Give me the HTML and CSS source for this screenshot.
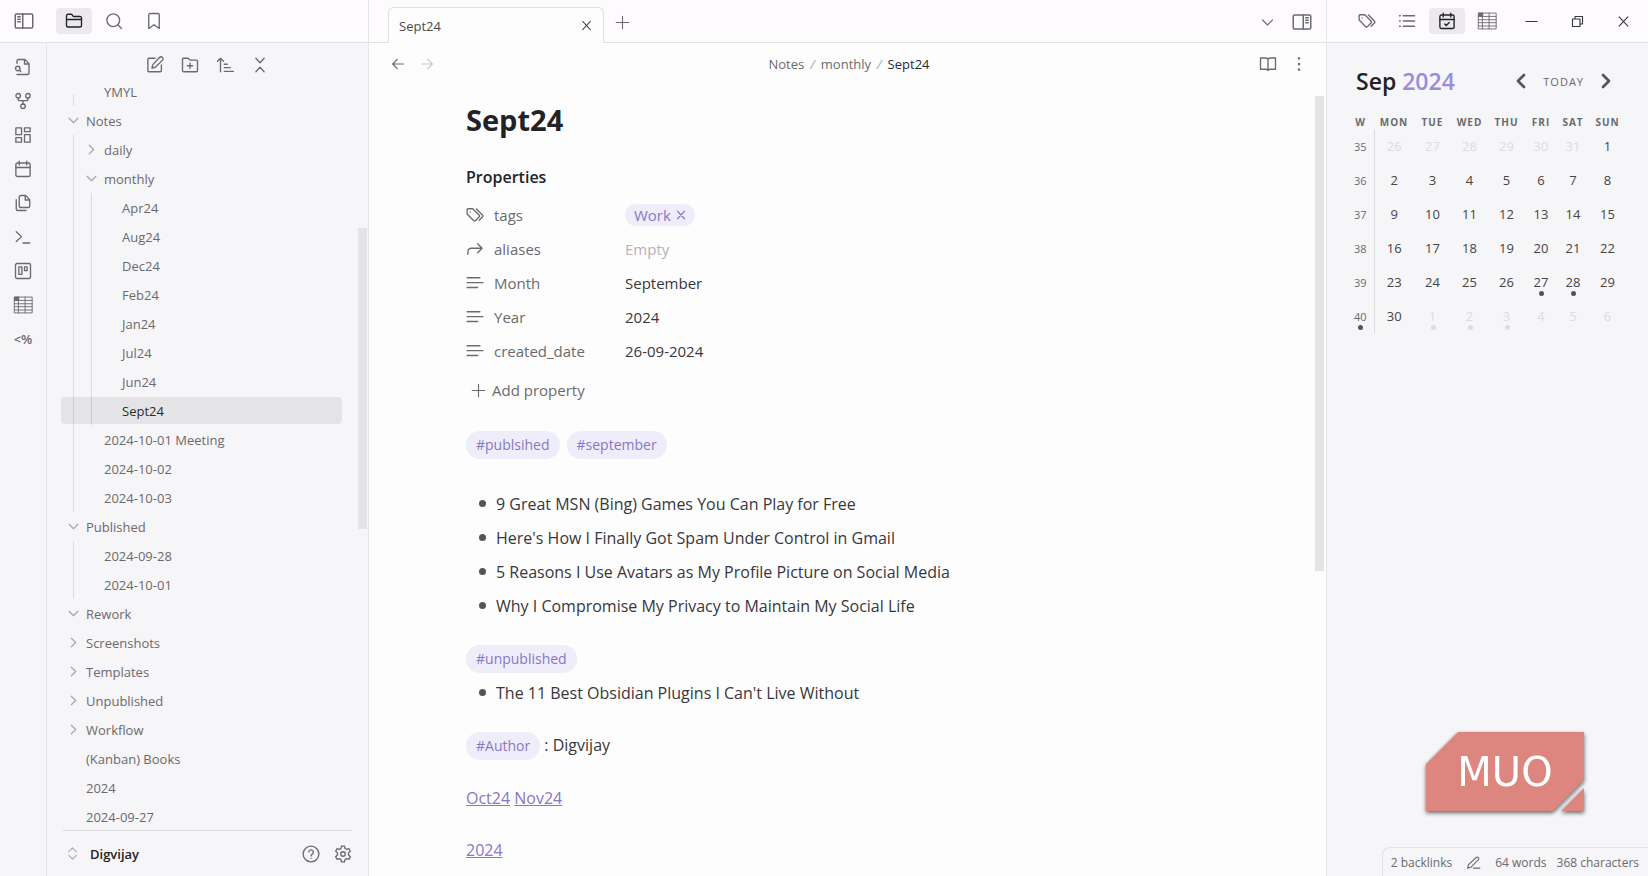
FILE: index.html
```html
<!DOCTYPE html>
<html lang="en">

<head>
    <meta charset="UTF-8">
    <meta name="viewport" content="width=device-width, initial-scale=1.0">
    <title>Sept24 - Notes</title>
    <link rel="stylesheet" href="styles.css">
</head>

<body>
    <!-- icon set -->
    <svg class="icon-set" aria-hidden="true">
        <symbol id="panel-left" viewBox="0 0 24 24"><rect x="1.5" y="3.5" width="21" height="17" rx="1.5"/><path d="M10.5 3.5v17M4.5 7h3M4.5 10h3M4.5 13h3"/></symbol>
        <symbol id="panel-right" viewBox="0 0 24 24"><rect x="1.5" y="3.5" width="21" height="17" rx="1.5"/><path d="M13.5 3.5v17M16.5 7h3M16.5 10h3M16.5 13h3"/></symbol>
        <symbol id="folder" viewBox="0 0 24 24"><path d="M2 10h20M4 20h16a2 2 0 0 0 2-2V8a2 2 0 0 0-2-2h-7.9a2 2 0 0 1-1.7-.9L9.6 3.9A2 2 0 0 0 7.9 3H4a2 2 0 0 0-2 2v13a2 2 0 0 0 2 2Z"/></symbol>
        <symbol id="search" viewBox="0 0 24 24"><circle cx="11" cy="11" r="8.5"/><path d="m22 22-5-5"/></symbol>
        <symbol id="bookmark" viewBox="0 0 24 24"><path d="M19 22l-7-5-7 5V4a2 2 0 0 1 2-2h10a2 2 0 0 1 2 2Z"/></symbol>
        <symbol id="file-search" viewBox="0 0 24 24"><path d="M4 22h14a2 2 0 0 0 2-2V7.5L14.5 2H6a2 2 0 0 0-2 2v3M14 2v6h6"/><circle cx="5" cy="14" r="3"/><path d="m9 18-1.7-1.7"/></symbol>
        <symbol id="graph" viewBox="0 0 24 24"><circle cx="12" cy="19" r="3"/><circle cx="5.5" cy="5" r="3"/><circle cx="18.500" cy="5" r="3"/><path d="M5.5 8v1.500a2 2 0 0 0 2 2h9a2 2 0 0 0 2-2V8M12 11.500V16"/></symbol>
        <symbol id="dashboard" viewBox="0 0 24 24"><path d="M2.500 2.500h7.500v9H2.500zM14 2.500h7.500v5H14zM14 11.500h7.500v10H14zM2.500 15.500h7.500v6H2.500z"/></symbol>
        <symbol id="calendar" viewBox="0 0 24 24"><rect x="2.500" y="4" width="19" height="18" rx="2"/><path d="M7 1.500v5M17 1.500v5M2.500 10h19"/></symbol>
        <symbol id="calendar-check" viewBox="0 0 24 24"><rect x="2.500" y="4" width="19" height="18" rx="2"/><path d="M7 1.500v5M17 1.500v5M2.500 10h19M9 16l2 2 4-4"/></symbol>
        <symbol id="copy" viewBox="0 0 24 24"><path d="M15.500 2H9a2 2 0 0 0-2 2v12a2 2 0 0 0 2 2h10a2 2 0 0 0 2-2V7.500ZM15 2v6h6M3 7.500V20a2 2 0 0 0 2 2h11"/></symbol>
        <symbol id="terminal" viewBox="0 0 24 24"><path d="m3 18 7-6.500L3 5M12 20h9"/></symbol>
        <symbol id="kanban" viewBox="0 0 24 24"><rect x="2" y="2" width="20" height="20" rx="2"/><path d="M6.500 6.500h4v10h-4zM14 6.500h3.500v5H14z"/></symbol>
        <symbol id="table" viewBox="0 0 24 24"><path d="M2 2.500h21v19H2zM2 6.500h21M2 10.500h21M2 14h21M2 18h21M6.500 2.500v19M14.500 2.500v19"/><path class="solid" d="M1.500 2h6v5h-6z"/></symbol>
        <symbol id="edit" viewBox="0 0 24 24"><path d="M12 3H4a1.500 1.500 0 0 0-1.500 1.500v15A1.500 1.500 0 0 0 4 21h15a1.500 1.500 0 0 0 1.500-1.500V12M18 2a2.500 2.500 0 0 1 4 3.500L12.500 15 8 16l1-4.500Z"/></symbol>
        <symbol id="folder-plus" viewBox="0 0 24 24"><path d="M12 9.500v7M8.500 13h7M3.500 21h17a1.500 1.500 0 0 0 1.500-1.500V7a1.500 1.500 0 0 0-1.500-1.500H12L9.500 3h-6A1.500 1.500 0 0 0 2 4.500v15A1.500 1.500 0 0 0 3.500 21Z"/></symbol>
        <symbol id="sort" viewBox="0 0 24 24"><path d="m2 7 4-4 4 4M6 3v18M11 11h4M11 15.500h8M11 20.500h12"/></symbol>
        <symbol id="collapse" viewBox="0 0 24 24"><path d="m6.500 21 5.500-6 5.500 6M6.500 3l5.500 6 5.500-6"/></symbol>
        <symbol id="down" viewBox="0 0 24 24"><path d="m4 8 8 8 8-8"/></symbol>
        <symbol id="right" viewBox="0 0 24 24"><path d="m8 4 8 8-8 8"/></symbol>
        <symbol id="left" viewBox="0 0 24 24"><path d="m16 4-8 8 8 8"/></symbol>
        <symbol id="up-down" viewBox="0 0 24 24"><path d="m5 15.500 7 7 7-7M5 8.500l7-7 7 7"/></symbol>
        <symbol id="help" viewBox="0 0 24 24"><circle cx="12" cy="12" r="10.500"/><path d="M9 9a3 3 0 0 1 6 1c0 2-3 2.500-3 4.500M12 17.500v.1"/></symbol>
        <symbol id="gear" viewBox="0 0 24 24"><path d="M10 1.500h4l.7 3.200 2 1.100 3.100-1 2 3.500-2.400 2.200v2.900l2.400 2.200-2 3.500-3.100-1-2 1.200-.7 3.200h-4l-.7-3.200-2-1.200-3.100 1-2-3.500 2.400-2.200v-2.900L2.200 8.300l2-3.500 3.100 1 2-1.100Z"/><circle cx="12" cy="12" r="3"/></symbol>
        <symbol id="close" viewBox="0 0 24 24"><path d="M5 4.500 19 19.500M19 4.500 5 19.500"/></symbol>
        <symbol id="plus" viewBox="0 0 24 24"><path d="M12 2v20M2 12h20"/></symbol>
        <symbol id="arrow-left" viewBox="0 0 24 24"><path d="M20 12H4M11 5l-7 7 7 7"/></symbol>
        <symbol id="arrow-right" viewBox="0 0 24 24"><path d="M4 12h16M13 5l7 7-7 7"/></symbol>
        <symbol id="book" viewBox="0 0 24 24"><path d="M12 5.500v15M12 5.500C11 4 9.500 4 8 4H2v15h6.500c1.500 0 2.500 0 3.500 1.500 1-1.500 2-1.500 3.500-1.500H22V4h-6c-1.500 0-3 0-4 1.500Z"/></symbol>
        <symbol id="dots" viewBox="0 0 24 24"><path class="solid" d="M10.500 3h3v3h-3zM10.500 10.500h3v3h-3zM10.500 18h3v3h-3z"/></symbol>
        <symbol id="tags" viewBox="0 0 24 24"><path d="M1.500 4.500v6.300l8.500 8.500a2 2 0 0 0 2.800 0l4.500-4.500a2 2 0 0 0 0-2.800L9 3.700H2.300ZM14 4l7.800 7.900a2 2 0 0 1 0 2.800L17.500 19M5.700 7.800v.1"/></symbol>
        <symbol id="list" viewBox="0 0 24 24"><path d="M7 5h15M7 12h15M7 19h15M2 5h1M2 12h1M2 19h1"/></symbol>
        <symbol id="text" viewBox="0 0 24 24"><path d="M1.500 5h17M1.500 11.500h21M1.500 18h14"/></symbol>
        <symbol id="forward" viewBox="0 0 24 24"><path d="m15.500 17 6-6-6-6M2.500 19v-3.500a4.500 4.500 0 0 1 4.500-4.500h14.500"/></symbol>
        <symbol id="minimize" viewBox="0 0 24 24"><path d="M3 12h18"/></symbol>
        <symbol id="restore" viewBox="0 0 24 24"><path d="M4 8h12v12H4zM8 8V4h12v12h-4"/></symbol>
        <symbol id="pen" viewBox="0 0 24 24"><path d="M12 21h10M16.500 4a2.500 2.500 0 0 1 3.500 3.500L8 19.500 2.500 21 4 15.500Z"/></symbol>
    </svg>

    <div class="app">
        <div class="left">
            <header class="bar">
                <button class="icon-btn toggle" aria-label="Toggle sidebar"><svg class="icon lg"><use href="#panel-left"/></svg></button>
                <button class="icon-btn active" aria-label="Files"><svg class="icon"><use href="#folder"/></svg></button>
                <button class="icon-btn" aria-label="Search"><svg class="icon"><use href="#search"/></svg></button>
                <button class="icon-btn" aria-label="Bookmarks"><svg class="icon"><use href="#bookmark"/></svg></button>
            </header>
            <div class="left-body">
                <nav class="ribbon">
                    <button aria-label="Quick switcher"><svg class="icon"><use href="#file-search"/></svg></button>
                    <button aria-label="Graph view"><svg class="icon"><use href="#graph"/></svg></button>
                    <button aria-label="Canvas"><svg class="icon"><use href="#dashboard"/></svg></button>
                    <button aria-label="Daily note"><svg class="icon"><use href="#calendar"/></svg></button>
                    <button aria-label="Insert template"><svg class="icon"><use href="#copy"/></svg></button>
                    <button aria-label="Command palette"><svg class="icon"><use href="#terminal"/></svg></button>
                    <button aria-label="Kanban board"><svg class="icon"><use href="#kanban"/></svg></button>
                    <button aria-label="Table"><svg class="icon lg thin"><use href="#table"/></svg></button>
                    <button class="templater">&lt;%</button>
                </nav>
                <aside class="files">
                    <div class="file-tools">
                        <button aria-label="New note"><svg class="icon"><use href="#edit"/></svg></button>
                        <button aria-label="New folder"><svg class="icon"><use href="#folder-plus"/></svg></button>
                        <button aria-label="Sort order"><svg class="icon"><use href="#sort"/></svg></button>
                        <button aria-label="Collapse all"><svg class="icon"><use href="#collapse"/></svg></button>
                    </div>
                    <div class="tree-wrap">
                        <ul class="tree">
                            <li class="l1"><button>YMYL</button></li>
                            <li><button><svg class="icon chev"><use href="#down"/></svg>Notes</button></li>
                            <li class="l1"><button><svg class="icon chev"><use href="#right"/></svg>daily</button></li>
                            <li class="l1"><button><svg class="icon chev"><use href="#down"/></svg>monthly</button></li>
                            <li class="l2"><button>Apr24</button></li>
                            <li class="l2"><button>Aug24</button></li>
                            <li class="l2"><button>Dec24</button></li>
                            <li class="l2"><button>Feb24</button></li>
                            <li class="l2"><button>Jan24</button></li>
                            <li class="l2"><button>Jul24</button></li>
                            <li class="l2"><button>Jun24</button></li>
                            <li class="l2"><button class="selected">Sept24</button></li>
                            <li class="l1"><button>2024-10-01 Meeting</button></li>
                            <li class="l1"><button>2024-10-02</button></li>
                            <li class="l1"><button>2024-10-03</button></li>
                            <li><button><svg class="icon chev"><use href="#down"/></svg>Published</button></li>
                            <li class="l1"><button>2024-09-28</button></li>
                            <li class="l1"><button>2024-10-01</button></li>
                            <li><button><svg class="icon chev"><use href="#down"/></svg>Rework</button></li>
                            <li><button><svg class="icon chev"><use href="#right"/></svg>Screenshots</button></li>
                            <li><button><svg class="icon chev"><use href="#right"/></svg>Templates</button></li>
                            <li><button><svg class="icon chev"><use href="#right"/></svg>Unpublished</button></li>
                            <li><button><svg class="icon chev"><use href="#right"/></svg>Workflow</button></li>
                            <li><button>(Kanban) Books</button></li>
                            <li><button>2024</button></li>
                            <li><button>2024-09-27</button></li>
                        </ul>
                        <div class="scroll-thumb tree-thumb"></div>
                    </div>
                    <footer class="vault">
                        <button class="vault-name"><svg class="icon sm"><use href="#up-down"/></svg>Digvijay</button>
                        <button aria-label="Help"><svg class="icon"><use href="#help"/></svg></button>
                        <button aria-label="Settings"><svg class="icon"><use href="#gear"/></svg></button>
                    </footer>
                </aside>
            </div>
        </div>

        <main class="main">
            <header class="bar tabs">
                <div class="tab">
                    <span>Sept24</span>
                    <button aria-label="Close tab"><svg class="icon sm"><use href="#close"/></svg></button>
                </div>
                <button class="icon-btn" aria-label="New tab"><svg class="icon md"><use href="#plus"/></svg></button>
                <div class="tabs-end">
                    <button class="tab-list" aria-label="Tab list"><svg class="icon md"><use href="#down"/></svg></button>
                    <button class="icon-btn" aria-label="Toggle right sidebar"><svg class="icon lg"><use href="#panel-right"/></svg></button>
                </div>
            </header>
            <div class="view-head">
                <div class="history">
                    <button aria-label="Back"><svg class="icon"><use href="#arrow-left"/></svg></button>
                    <button class="off" aria-label="Forward"><svg class="icon"><use href="#arrow-right"/></svg></button>
                </div>
                <div class="crumbs"><a href="#">Notes</a><i>/</i><a href="#">monthly</a><i>/</i><b>Sept24</b></div>
                <div class="view-actions">
                    <button aria-label="Reading view"><svg class="icon"><use href="#book"/></svg></button>
                    <button aria-label="More options"><svg class="icon"><use href="#dots"/></svg></button>
                </div>
            </div>
            <div class="note-wrap">
                <article class="note">
                    <h1>Sept24</h1>
                    <h2>Properties</h2>
                    <div class="props">
                        <div class="prop">
                            <span class="key"><svg class="icon"><use href="#tags"/></svg>tags</span>
                            <span class="pill small">Work<button aria-label="Remove tag"><svg class="icon xs"><use href="#close"/></svg></button></span>
                        </div>
                        <div class="prop">
                            <label class="key" for="aliases"><svg class="icon"><use href="#forward"/></svg>aliases</label>
                            <input id="aliases" type="text" placeholder="Empty">
                        </div>
                        <div class="prop">
                            <label class="key" for="month"><svg class="icon"><use href="#text"/></svg>Month</label>
                            <input id="month" type="text" value="September">
                        </div>
                        <div class="prop">
                            <label class="key" for="year"><svg class="icon"><use href="#text"/></svg>Year</label>
                            <input id="year" type="text" value="2024">
                        </div>
                        <div class="prop">
                            <label class="key" for="created"><svg class="icon"><use href="#text"/></svg>created_date</label>
                            <input id="created" type="text" value="26-09-2024">
                        </div>
                    </div>
                    <button class="add-prop"><svg class="icon md"><use href="#plus"/></svg>Add property</button>
                    <p class="line tag-line"><a class="pill" href="#">#publsihed</a><a class="pill" href="#">#september</a></p>
                    <ul class="bullets">
                        <li>9 Great MSN (Bing) Games You Can Play for Free</li>
                        <li>Here's How I Finally Got Spam Under Control in Gmail</li>
                        <li>5 Reasons I Use Avatars as My Profile Picture on Social Media</li>
                        <li>Why I Compromise My Privacy to Maintain My Social Life</li>
                    </ul>
                    <p class="line"><a class="pill" href="#">#unpublished</a></p>
                    <ul class="bullets">
                        <li>The 11 Best Obsidian Plugins I Can't Live Without</li>
                    </ul>
                    <p class="line"><a class="pill" href="#">#Author</a> : Digvijay</p>
                    <p class="line"><a href="#">Oct24</a> <a href="#">Nov24</a></p>
                    <p class="line"><a href="#">2024</a></p>
                </article>
                <div class="scroll-thumb note-thumb"></div>
            </div>
        </main>

        <div class="right">
            <header class="bar">
                <button class="icon-btn" aria-label="Tags"><svg class="icon"><use href="#tags"/></svg></button>
                <button class="icon-btn" aria-label="Outline"><svg class="icon"><use href="#list"/></svg></button>
                <button class="icon-btn active" aria-label="Calendar"><svg class="icon"><use href="#calendar-check"/></svg></button>
                <button class="icon-btn" aria-label="Table"><svg class="icon lg thin"><use href="#table"/></svg></button>
                <div class="window-btns">
                    <button aria-label="Minimize"><svg class="icon md"><use href="#minimize"/></svg></button>
                    <button aria-label="Restore"><svg class="icon md"><use href="#restore"/></svg></button>
                    <button aria-label="Close"><svg class="icon md"><use href="#close"/></svg></button>
                </div>
            </header>
            <section class="calendar">
                <div class="cal-head">
                    <h3>Sep <span>2024</span></h3>
                    <button aria-label="Previous month"><svg class="icon arrow"><use href="#left"/></svg></button>
                    <button class="today">TODAY</button>
                    <button aria-label="Next month"><svg class="icon arrow"><use href="#right"/></svg></button>
                </div>
                <table>
                    <colgroup>
                        <col class="c-week"><col class="c-wide"><col class="c-mid"><col class="c-mid"><col class="c-mid"><col class="c-slim"><col class="c-slim"><col class="c-mid">
                    </colgroup>
                    <thead>
                        <tr><th>W</th><th>MON</th><th>TUE</th><th>WED</th><th>THU</th><th>FRI</th><th>SAT</th><th>SUN</th></tr>
                    </thead>
                    <tbody>
                        <tr><th>35</th><td class="other">26</td><td class="other">27</td><td class="other">28</td><td class="other">29</td><td class="other">30</td><td class="other">31</td><td>1</td></tr>
                        <tr><th>36</th><td>2</td><td>3</td><td>4</td><td>5</td><td>6</td><td>7</td><td>8</td></tr>
                        <tr><th>37</th><td>9</td><td>10</td><td>11</td><td>12</td><td>13</td><td>14</td><td>15</td></tr>
                        <tr><th>38</th><td>16</td><td>17</td><td>18</td><td>19</td><td>20</td><td>21</td><td>22</td></tr>
                        <tr><th>39</th><td>23</td><td>24</td><td>25</td><td>26</td><td class="dot">27</td><td class="dot">28</td><td>29</td></tr>
                        <tr><th class="dot">40</th><td>30</td><td class="other dot">1</td><td class="other dot">2</td><td class="other dot">3</td><td class="other">4</td><td class="other">5</td><td class="other">6</td></tr>
                    </tbody>
                </table>
            </section>
            <svg class="logo" viewBox="0 0 158 80" role="img" aria-label="MUO">
                <path d="M32 0h126v48l-31 31H0V32ZM158 56v23h-23Z"/>
                <text x="79" y="54" text-anchor="middle">MUO</text>
            </svg>
            <footer class="status">
                <span>2 backlinks</span>
                <svg class="icon md"><use href="#pen"/></svg>
                <span>64 words</span>
                <span>368 characters</span>
            </footer>
        </div>
    </div>
</body>

</html>
```

FILE: styles.css
```css
* {
    box-sizing: border-box;
}

body {
    margin: 0;
    font-family: "Open Sans", "Noto Sans", sans-serif;
    font-size: 13px;
    color: #6b6a6d;
    background-color: #fefdfe;
}

button, input {
    font: inherit;
    color: inherit;
    background: none;
    border: none;
    padding: 0;
    margin: 0;
}

button {
    display: flex;
    align-items: center;
    justify-content: center;
    cursor: pointer;
}

ul, h1, h2, h3, p {
    margin: 0;
    padding: 0;
}

ul {
    list-style: none;
}

/* icons */
.icon-set {
    display: none;
}

.icon {
    width: 18px;
    height: 18px;
    flex: none;
    fill: none;
    stroke: currentColor;
    stroke-width: 1.8;
    stroke-linecap: round;
    stroke-linejoin: round;
}

.solid {
    fill: currentColor;
    stroke: none;
}

.icon.lg {
    width: 20px;
    height: 20px;
}

.icon.md {
    width: 15px;
    height: 15px;
}

.icon.sm {
    width: 13px;
    height: 13px;
    stroke-width: 2;
}

.icon.xs {
    width: 12px;
    height: 12px;
    stroke-width: 2.4;
}

.icon.thin {
    stroke-width: 1.1;
}

/* layout */
.app {
    display: grid;
    grid-template-columns: 369px 1fr 322px;
    height: 100vh;
    overflow: hidden;
}

.left, .right, .main {
    display: flex;
    flex-direction: column;
    min-width: 0;
    min-height: 0;
}

.left, .right {
    background-color: #f6f5f8;
}

.left {
    border-right: 1px solid #e6e4e7;
}

.right {
    border-left: 1px solid #e6e4e7;
}

.bar {
    display: flex;
    flex: none;
    align-items: center;
    height: 43px;
    background-color: #fdfbfd;
    border-bottom: 1px solid #e2e0e3;
}

.icon-btn {
    width: 36px;
    height: 26px;
    margin-right: 4px;
    border-radius: 4px;
}

.icon-btn.active {
    background-color: #ebe9eb;
    color: #232226;
}

.toggle {
    width: 47px;
    margin-right: 9px;
}

.left-body {
    display: flex;
    flex: 1;
    min-height: 0;
}

.ribbon {
    display: flex;
    flex-direction: column;
    width: 47px;
    padding-top: 7px;
    border-right: 1px solid #e6e4e7;
}

.ribbon button {
    height: 34px;
}

.templater {
    font-weight: 600;
}

/* file explorer */
.files {
    display: flex;
    flex: 1;
    flex-direction: column;
    min-width: 0;
}

.file-tools {
    display: flex;
    flex: none;
    justify-content: center;
    gap: 17px;
    height: 34px;
    padding-top: 10px;
}

.tree-wrap {
    position: relative;
    flex: 1;
    min-height: 0;
    overflow: hidden;
}

.tree {
    padding: 0 26px 0 14px;
}

.tree li {
    height: 29px;
    padding: 1px 0;
    background-repeat: no-repeat;
    background-size: 1px 100%;
}

.tree button {
    justify-content: flex-start;
    width: 100%;
    height: 27px;
    padding-left: 25px;
    border-radius: 4px;
}

.tree .chev {
    width: 13px;
    height: 13px;
    margin-left: -19px;
    margin-right: 6px;
    color: #aaa8ab;
    stroke-width: 2.4;
}

.tree .l1 {
    background-image: linear-gradient(#dddbde, #dddbde);
    background-position: 12px 0;
}

.tree .l2 {
    background-image: linear-gradient(#dddbde, #dddbde), linear-gradient(#dddbde, #dddbde);
    background-position: 12px 0, 30px 0;
}

.tree li:first-child {
    background-size: 1px 12px;
    background-position: 12px 100%;
}

.tree .l1 button {
    padding-left: 43px;
}

.tree .l2 button {
    padding-left: 61px;
}

.tree .selected {
    background-color: rgba(0, 0, 0, 0.07);
    color: #2c2b2e;
}

.scroll-thumb {
    position: absolute;
    width: 9px;
    background-color: #e4e3e6;
}

.tree-thumb {
    top: 20%;
    right: 1px;
    height: 40%;
}

.vault {
    display: flex;
    align-items: center;
    gap: 14px;
    height: 46px;
    margin: 0 16px;
    border-top: 1px solid #dddbde;
}

.vault-name {
    gap: 11px;
    margin-right: auto;
    padding-left: 3px;
    font-weight: 600;
    color: #232226;
}

.vault-name .icon {
    color: #aaa8ab;
}

/* tabs */
.tabs {
    align-items: flex-end;
    padding-left: 19px;
}

.tab {
    display: flex;
    align-items: center;
    justify-content: space-between;
    width: 216px;
    height: 36px;
    margin-bottom: -1px;
    padding: 0 10px;
    background-color: #fefdfe;
    border: 1px solid #e2e0e3;
    border-bottom: none;
    border-radius: 6px 6px 0 0;
    color: #4a494c;
}

.tabs > .icon-btn, .tabs-end {
    margin-bottom: 7px;
}

.tabs-end {
    display: flex;
    align-items: center;
    gap: 9px;
    margin-left: auto;
    padding-right: 2px;
}

.view-head {
    display: grid;
    grid-template-columns: 1fr auto 1fr;
    flex: none;
    align-items: center;
    height: 41px;
    padding: 0 18px 0 21px;
}

.history, .view-actions {
    display: flex;
    gap: 13px;
}

.history .icon {
    width: 16px;
    height: 16px;
}

.view-actions {
    justify-content: flex-end;
}

.off {
    color: #c8c6c9;
}

.crumbs a {
    color: inherit;
    text-decoration: none;
}

.crumbs i {
    margin: 0 6px;
    color: #aaa8ab;
}

.crumbs b {
    font-weight: 400;
    color: #2c2b2e;
}

/* note */
.note-wrap {
    position: relative;
    flex: 1;
    min-height: 0;
    overflow: hidden;
}

.note-thumb {
    top: 12px;
    right: 2px;
    height: 60%;
}

.note {
    max-width: 763px;
    margin: 0 auto;
    padding: 14px 0;
    font-size: 16px;
    color: #38373a;
}

.note h1 {
    font-size: 29px;
    line-height: 44px;
    font-weight: 700;
    color: #232226;
}

.note h2 {
    margin-top: 22px;
    font-size: 16px;
    line-height: 26px;
    font-weight: 600;
    color: #232226;
}

.props {
    margin-top: 8px;
    font-size: 15px;
}

.prop {
    display: grid;
    grid-template-columns: 159px 1fr;
    align-items: center;
    justify-items: start;
    height: 34px;
}

.key {
    display: flex;
    align-items: center;
    gap: 10px;
    color: #6b6a6d;
}

.prop input::placeholder {
    color: #b4b2b6;
    opacity: 1;
}

.pill {
    padding: 4px 10px 5px;
    border-radius: 14px;
    background-color: #f0edfb;
    color: #8678c4;
    font-size: 14px;
    text-decoration: none;
}

.pill.small {
    display: flex;
    align-items: center;
    gap: 4px;
    height: 22px;
    padding: 0 8px 0 9px;
    font-size: 15px;
}

.add-prop {
    gap: 6px;
    height: 28px;
    margin-top: 8px;
    padding-left: 5px;
    font-size: 15px;
    color: #6b6a6d;
}

.note .line {
    margin-bottom: 18px;
    line-height: 34px;
}

.note .line a {
    color: #8678c4;
}

.note .tag-line {
    display: flex;
    gap: 7px;
    margin: 27px 0;
    line-height: 19px;
}

.bullets {
    padding-left: 30px;
}

.bullets li {
    position: relative;
    line-height: 34px;
}

.bullets li::before {
    content: "";
    position: absolute;
    left: -17px;
    top: 13px;
    width: 7px;
    height: 7px;
    border-radius: 50%;
    background-color: #555457;
}

.bullets + .line {
    margin-top: 18px;
}

.note .line:has(+ .bullets) {
    margin-bottom: 0;
}

.note .tag-line:has(+ .bullets) {
    margin-bottom: 28px;
}

/* right side */
.right .bar {
    padding-left: 22px;
}

.window-btns {
    display: flex;
    flex: 1;
    justify-content: space-between;
    padding: 0 17px 0 15px;
    color: #38373a;
}

.calendar {
    padding: 19px 22px 0 20px;
}

.cal-head {
    display: flex;
    align-items: center;
    gap: 13px;
    height: 38px;
    padding: 0 11px 0 9px;
}

.cal-head h3 {
    margin-right: auto;
    font-size: 23px;
    font-weight: 600;
    color: #232226;
}

.cal-head h3 span {
    color: #9a8cdc;
}

.cal-head .arrow {
    stroke-width: 3.6;
    color: #555457;
}

.today {
    font-size: 11px;
    letter-spacing: 1px;
}

.calendar table {
    width: 100%;
    margin-top: 15px;
    border-collapse: collapse;
    table-layout: fixed;
    text-align: center;
}

.c-week {
    width: 27px;
}

.c-wide {
    width: 40px;
}

.c-mid {
    width: 37px;
}

.c-slim {
    width: 32px;
}

.calendar th, .calendar td {
    position: relative;
    height: 34px;
    padding: 0;
}

.calendar thead th {
    height: 14px;
    font-size: 10px;
    letter-spacing: 1px;
}

.calendar tbody th {
    font-size: 11px;
    font-weight: 400;
    border-right: 1px solid #dddbde;
}

.calendar td {
    font-size: 13px;
    color: #454447;
}

.calendar .other {
    color: #dedce0;
}

.dot::after {
    content: "";
    position: absolute;
    left: 50%;
    bottom: 3px;
    width: 5px;
    height: 5px;
    margin-left: -2px;
    border-radius: 50%;
    background-color: #555457;
}

.other.dot::after {
    background-color: #dedce0;
}

.logo {
    width: 158px;
    height: 80px;
    margin: auto 64px 35px auto;
    overflow: visible;
    filter: drop-shadow(0 2px 2px rgba(0, 0, 0, 0.6));
}

.logo path {
    fill: #dd867f;
}

.logo text {
    font-family: "DejaVu Sans", sans-serif;
    font-size: 40px;
    fill: #fff;
}

.status {
    display: flex;
    align-items: center;
    align-self: flex-end;
    height: 29px;
    padding: 0 9px 0 8px;
    border: 1px solid #e2e0e3;
    border-width: 1px 0 0 1px;
    border-radius: 8px 0 0 0;
    font-size: 12px;
    gap: 10px;
}

.status .icon {
    margin: 0 4px;
}
```
